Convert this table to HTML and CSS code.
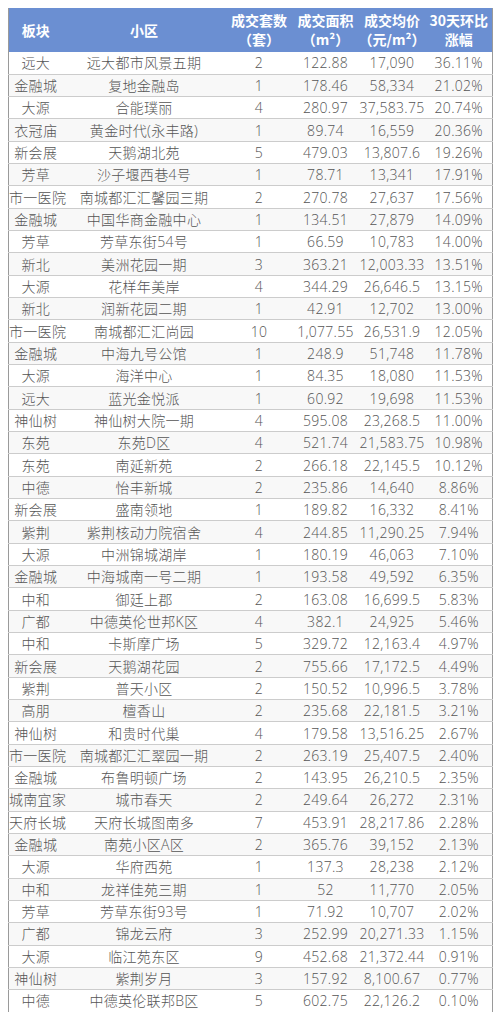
FILE: index.html
```html
<!DOCTYPE html>
<html lang="zh">
<head>
<meta charset="utf-8">
<link rel="stylesheet" href="styles.css">
</head>
<body>
<table class="deals">
<colgroup>
<col class="c1"><col class="c2"><col class="c3"><col class="c4"><col class="c5"><col class="c6">
</colgroup>
<thead>
<tr><th>板块</th><th>小区</th><th>成交套数<br>（套）</th><th>成交面积<br>（m²）</th><th>成交均价<br>（元/m²）</th><th>30天环比<br>涨幅</th></tr>
</thead>
<tbody>
<tr><td>远大</td><td>远大都市风景五期</td><td>2</td><td>122.88</td><td>17,090</td><td>36.11%</td></tr>
<tr><td>金融城</td><td>复地金融岛</td><td>1</td><td>178.46</td><td>58,334</td><td>21.02%</td></tr>
<tr><td>大源</td><td>合能璞丽</td><td>4</td><td>280.97</td><td>37,583.75</td><td>20.74%</td></tr>
<tr><td>衣冠庙</td><td>黄金时代(永丰路)</td><td>1</td><td>89.74</td><td>16,559</td><td>20.36%</td></tr>
<tr><td>新会展</td><td>天鹅湖北苑</td><td>5</td><td>479.03</td><td>13,807.6</td><td>19.26%</td></tr>
<tr><td>芳草</td><td>沙子堰西巷4号</td><td>1</td><td>78.71</td><td>13,341</td><td>17.91%</td></tr>
<tr><td>市一医院</td><td>南城都汇汇馨园三期</td><td>2</td><td>270.78</td><td>27,637</td><td>17.56%</td></tr>
<tr><td>金融城</td><td>中国华商金融中心</td><td>1</td><td>134.51</td><td>27,879</td><td>14.09%</td></tr>
<tr><td>芳草</td><td>芳草东街54号</td><td>1</td><td>66.59</td><td>10,783</td><td>14.00%</td></tr>
<tr><td>新北</td><td>美洲花园一期</td><td>3</td><td>363.21</td><td>12,003.33</td><td>13.51%</td></tr>
<tr><td>大源</td><td>花样年美岸</td><td>4</td><td>344.29</td><td>26,646.5</td><td>13.15%</td></tr>
<tr><td>新北</td><td>润新花园二期</td><td>1</td><td>42.91</td><td>12,702</td><td>13.00%</td></tr>
<tr><td>市一医院</td><td>南城都汇汇尚园</td><td>10</td><td>1,077.55</td><td>26,531.9</td><td>12.05%</td></tr>
<tr><td>金融城</td><td>中海九号公馆</td><td>1</td><td>248.9</td><td>51,748</td><td>11.78%</td></tr>
<tr><td>大源</td><td>海洋中心</td><td>1</td><td>84.35</td><td>18,080</td><td>11.53%</td></tr>
<tr><td>远大</td><td>蓝光金悦派</td><td>1</td><td>60.92</td><td>19,698</td><td>11.53%</td></tr>
<tr><td>神仙树</td><td>神仙树大院一期</td><td>4</td><td>595.08</td><td>23,268.5</td><td>11.00%</td></tr>
<tr><td>东苑</td><td>东苑D区</td><td>4</td><td>521.74</td><td>21,583.75</td><td>10.98%</td></tr>
<tr><td>东苑</td><td>南延新苑</td><td>2</td><td>266.18</td><td>22,145.5</td><td>10.12%</td></tr>
<tr><td>中德</td><td>怡丰新城</td><td>2</td><td>235.86</td><td>14,640</td><td>8.86%</td></tr>
<tr><td>新会展</td><td>盛南领地</td><td>1</td><td>189.82</td><td>16,332</td><td>8.41%</td></tr>
<tr><td>紫荆</td><td>紫荆核动力院宿舍</td><td>4</td><td>244.85</td><td>11,290.25</td><td>7.94%</td></tr>
<tr><td>大源</td><td>中洲锦城湖岸</td><td>1</td><td>180.19</td><td>46,063</td><td>7.10%</td></tr>
<tr><td>金融城</td><td>中海城南一号二期</td><td>1</td><td>193.58</td><td>49,592</td><td>6.35%</td></tr>
<tr><td>中和</td><td>御廷上郡</td><td>2</td><td>163.08</td><td>16,699.5</td><td>5.83%</td></tr>
<tr><td>广都</td><td>中德英伦世邦K区</td><td>4</td><td>382.1</td><td>24,925</td><td>5.46%</td></tr>
<tr><td>中和</td><td>卡斯摩广场</td><td>5</td><td>329.72</td><td>12,163.4</td><td>4.97%</td></tr>
<tr><td>新会展</td><td>天鹅湖花园</td><td>2</td><td>755.66</td><td>17,172.5</td><td>4.49%</td></tr>
<tr><td>紫荆</td><td>普天小区</td><td>2</td><td>150.52</td><td>10,996.5</td><td>3.78%</td></tr>
<tr><td>高朋</td><td>檀香山</td><td>2</td><td>235.68</td><td>22,181.5</td><td>3.21%</td></tr>
<tr><td>神仙树</td><td>和贵时代巢</td><td>4</td><td>179.58</td><td>13,516.25</td><td>2.67%</td></tr>
<tr><td>市一医院</td><td>南城都汇汇翠园一期</td><td>2</td><td>263.19</td><td>25,407.5</td><td>2.40%</td></tr>
<tr><td>金融城</td><td>布鲁明顿广场</td><td>2</td><td>143.95</td><td>26,210.5</td><td>2.35%</td></tr>
<tr><td>城南宜家</td><td>城市春天</td><td>2</td><td>249.64</td><td>26,272</td><td>2.31%</td></tr>
<tr><td>天府长城</td><td>天府长城图南多</td><td>7</td><td>453.91</td><td>28,217.86</td><td>2.28%</td></tr>
<tr><td>金融城</td><td>南苑小区A区</td><td>2</td><td>365.76</td><td>39,152</td><td>2.13%</td></tr>
<tr><td>大源</td><td>华府西苑</td><td>1</td><td>137.3</td><td>28,238</td><td>2.12%</td></tr>
<tr><td>中和</td><td>龙祥佳苑三期</td><td>1</td><td>52</td><td>11,770</td><td>2.05%</td></tr>
<tr><td>芳草</td><td>芳草东街93号</td><td>1</td><td>71.92</td><td>10,707</td><td>2.02%</td></tr>
<tr><td>广都</td><td>锦龙云府</td><td>3</td><td>252.99</td><td>20,271.33</td><td>1.15%</td></tr>
<tr><td>大源</td><td>临江苑东区</td><td>9</td><td>452.68</td><td>21,372.44</td><td>0.91%</td></tr>
<tr><td>神仙树</td><td>紫荆岁月</td><td>3</td><td>157.92</td><td>8,100.67</td><td>0.77%</td></tr>
<tr><td>中德</td><td>中德英伦联邦B区</td><td>5</td><td>602.75</td><td>22,126.2</td><td>0.10%</td></tr>
</tbody>
</table>
</body>
</html>
```
FILE: styles.css
```css
html, body {
  margin: 0;
  padding: 0;
  background: #ffffff;
}
body {
  padding: 8px 8px 0 8px;
}
.deals {
  width: 484px;
  border-collapse: collapse;
  table-layout: fixed;
  font-family: "Open Sans", "Noto Sans CJK SC", sans-serif;
  font-size: 14px;
  font-weight: 300;
  color: #555555;
  border-left: 1px solid #9a9a9a;
  border-right: 1px solid #9a9a9a;
}
.c1 { width: 54px; }
.c2 { width: 163px; }
.c3 { width: 67px; }
.c4 { width: 66px; }
.c5 { width: 67px; }
.c6 { width: 67px; }
.deals th {
  background: #6b8fd2;
  color: #ffffff;
  font-family: "Noto Sans CJK SC", "Open Sans", sans-serif;
  font-weight: 700;
  font-size: 14px;
  line-height: 19px;
  height: 44px;
  padding: 0;
  text-align: center;
  box-sizing: border-box;
}
.deals td {
  height: 22.33px;
  padding: 0;
  text-align: center;
  line-height: 21px;
  letter-spacing: 0.3px;
  border-bottom: 1px solid #cccccc;
  white-space: nowrap;
  box-sizing: border-box;
}
.deals tbody tr:nth-child(even) td {
  background: #f8f8f8;
}
```
